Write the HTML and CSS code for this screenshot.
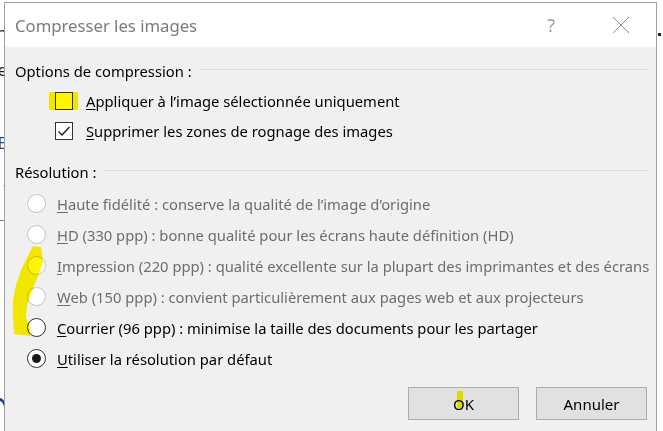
FILE: index.html
```html
<!DOCTYPE html>
<html lang="fr">
<head>
  <meta charset="UTF-8">
  <title>Compresser les images</title>
  <link rel="stylesheet" href="styles.css">
</head>
<body>
  <div class="desktop">
    <div class="doc-left">
      <span class="frag frag-n">n</span>
      <span class="frag frag-e">e</span>
      <span class="frag frag-E">E</span>
      <span class="frag frag-dot">.</span>
      <span class="frag-rule"></span>
      <span class="frag-blue"></span>
    </div>

    <div class="dialog">
      <div class="titlebar">
        <span class="title">Compresser les images</span>
        <span class="help">?</span>
        <svg class="close" width="18" height="18" viewBox="0 0 18 18">
          <path d="M1 1 L17 17 M17 1 L1 17" stroke="#8c8c8c" stroke-width="1" fill="none"/>
        </svg>
      </div>

      <div class="content">
        <div class="group-head">
          <span>Options de compression :</span>
          <span class="rule"></span>
        </div>
        <div class="check-row">
          <span class="checkbox"></span>
          <span class="label"><u>A</u>ppliquer à l’image sélectionnée uniquement</span>
        </div>
        <div class="check-row">
          <span class="checkbox">
            <svg width="16" height="16" viewBox="0 0 16 16">
              <path d="M2.5 8.5 L6 12 L13.5 4" stroke="#1a1a1a" stroke-width="1.3" fill="none"/>
            </svg>
          </span>
          <span class="label"><u>S</u>upprimer les zones de rognage des images</span>
        </div>

        <div class="group-head group-res">
          <span>Résolution :</span>
          <span class="rule"></span>
        </div>
        <div class="radio-row disabled">
          <span class="radio"></span>
          <span class="label"><u>H</u>aute fidélité : conserve la qualité de l’image d’origine</span>
        </div>
        <div class="radio-row disabled">
          <span class="radio"></span>
          <span class="label"><u>H</u>D (330 ppp) : bonne qualité pour les écrans haute définition (HD)</span>
        </div>
        <div class="radio-row disabled">
          <span class="radio"></span>
          <span class="label"><u>I</u>mpression (220 ppp) : qualité excellente sur la plupart des imprimantes et des écrans</span>
        </div>
        <div class="radio-row disabled">
          <span class="radio"></span>
          <span class="label"><u>W</u>eb (150 ppp) : convient particulièrement aux pages web et aux projecteurs</span>
        </div>
        <div class="radio-row">
          <span class="radio"></span>
          <span class="label"><u>C</u>ourrier (96 ppp) : minimise la taille des documents pour les partager</span>
        </div>
        <div class="radio-row">
          <span class="radio checked"></span>
          <span class="label"><u>U</u>tiliser la résolution par défaut</span>
        </div>

        <div class="buttons">
          <button class="btn">OK</button>
          <button class="btn">Annuler</button>
        </div>
      </div>

      <!-- coups de surligneur jaune sur la capture -->
      <span class="mark mark-check"></span>
      <span class="mark mark-ok"></span>
      <svg class="mark-stroke" width="45" height="95" viewBox="5 245 45 95">
        <path d="M33 246 L41 247 L43 262 L38 276 L32 291 L27 305 L26 318 L30 327 L30 336 L14 334 L13 318 L13 300 L16 285 L22 268 L29 254 Z" fill="#fff500"/>
      </svg>
    </div>

    <div class="doc-right">
      <span class="dot"></span>
    </div>
  </div>
</body>
</html>
```

FILE: styles.css
```css
body {
  margin: 0;
  width: 663px;
  height: 431px;
  overflow: hidden;
  background: #ffffff;
  font-family: "Noto Sans", "Open Sans", sans-serif;
  color: #000000;
}

.desktop {
  display: flex;
  height: 431px;
}

/* bout du document derrière la boîte de dialogue */
.doc-left {
  position: relative;
  width: 4px;
  overflow: hidden;
  flex-shrink: 0;
}

.frag {
  position: absolute;
  right: -3px;
  font-size: 17px;
  line-height: 1;
  color: #222;
}

.frag-n { top: 24px; }
.frag-e { top: 61px; }
.frag-E { top: 134px; color: #1f4e79; }
.frag-dot { top: 172px; }

.frag-rule {
  position: absolute;
  left: 0;
  top: 220px;
  width: 4px;
  height: 1px;
  background: #777;
}

.frag-blue {
  position: absolute;
  left: -10px;
  top: 398px;
  width: 13px;
  height: 40px;
  border: 3px solid #1d3f8a;
  border-radius: 50%;
}

.doc-right {
  position: relative;
  flex: 1;
}

.dot {
  position: absolute;
  left: 1px;
  top: 33px;
  width: 3px;
  height: 3px;
  background: #222;
}

.dialog {
  position: relative;
  width: 651px;
  margin-top: 2px;
  border: 1px solid #a0a0a0;
  border-bottom: none;
  background: #f0f0f0;
  flex-shrink: 0;
}

.titlebar {
  display: flex;
  align-items: center;
  height: 44px;
  padding: 0 26px 0 10px;
  background: #ffffff;
}

.title {
  font-size: 16.7px;
  color: #7b7b7b;
  flex: 1;
}

.help {
  font-size: 18px;
  color: #a0a0a0;
  margin-right: 57px;
}

.close {
  width: 18px;
  height: 18px;
}

.content {
  padding: 14px 9px 20px 10px;
}

.group-head {
  display: flex;
  align-items: center;
  height: 20px;
  font-size: 14.75px;
  margin-bottom: 5px;
}

.group-head .rule {
  flex: 1;
  height: 1px;
  margin-left: 7px;
  margin-top: -3px;
  background: #dadada;
}

.group-res {
  margin-top: 16px;
  margin-bottom: 6px;
}

.check-row,
.radio-row {
  display: flex;
  align-items: center;
  font-size: 14.75px;
  white-space: nowrap;
}

.check-row {
  height: 30px;
  padding-left: 40px;
}

.radio-row {
  height: 31px;
  padding-left: 12px;
}

.label u {
  text-decoration-thickness: 1px;
  text-underline-offset: 2px;
}

.checkbox {
  display: flex;
  align-items: center;
  justify-content: center;
  width: 16px;
  height: 16px;
  border: 1px solid #333;
  background: #fff;
  margin-right: 13px;
}

.radio {
  width: 17px;
  height: 17px;
  border: 1px solid #333;
  border-radius: 50%;
  background: #fff;
  margin-right: 11px;
  display: flex;
  align-items: center;
  justify-content: center;
  flex-shrink: 0;
}

.radio.checked::after {
  content: "";
  width: 9px;
  height: 9px;
  border-radius: 50%;
  background: #1a1a1a;
}

.disabled .radio {
  border-color: #c4c4c4;
}

.disabled .label {
  color: #6d6d6d;
}

.buttons {
  display: flex;
  justify-content: flex-end;
  gap: 17px;
  margin-top: 13px;
}

.btn {
  width: 111px;
  height: 33px;
  border: 1px solid #adadad;
  background: #e1e1e1;
  font-family: inherit;
  font-size: 15px;
  color: #000;
  padding: 0;
}

.mark {
  position: absolute;
  background: #fff500;
  mix-blend-mode: multiply;
}

.mark-check {
  left: 44px;
  top: 89px;
  width: 29px;
  height: 18px;
}

.mark-ok {
  left: 452px;
  top: 388px;
  width: 6px;
  height: 17px;
}

.mark-stroke {
  position: absolute;
  left: 0;
  top: 242px;
  mix-blend-mode: multiply;
}
```
